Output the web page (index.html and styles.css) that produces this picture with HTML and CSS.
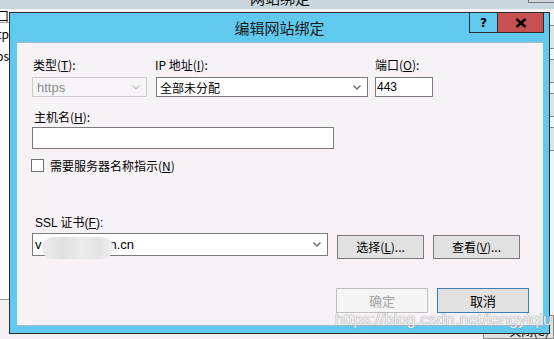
FILE: index.html
```html
<!DOCTYPE html>
<html>
<head>
<meta charset="utf-8">
<link rel="stylesheet" href="styles.css">
</head>
<body>
<div class="parent">
  <div class="parent-title">
    <span class="parent-title-text">网站绑定</span>
    <span class="parent-close"></span>
  </div>
  <div class="parent-body">
    <div class="left-panel">
      <div class="lp-row lp-head">端口</div>
      <div class="lp-row">http</div>
      <div class="lp-row">https</div>
    </div>
    <div class="spacer"></div>
    <div class="right-panel">
      <div class="rp-btn"></div>
      <div class="rp-btn"></div>
      <div class="rp-btn"></div>
      <div class="rp-btn"></div>
    </div>
  </div>
  <div class="parent-foot">
    <span class="parent-close-btn">关闭(C)</span>
  </div>
</div>

<div class="dialog">
  <div class="titlebar">
    <span class="title">编辑网站绑定</span>
    <div class="tb-buttons">
      <span class="tb-help">?</span>
      <span class="tb-close"><svg width="12" height="10" viewBox="0 0 12 10"><path d="M1.5 1 L10.5 9 M10.5 1 L1.5 9" stroke="#000" stroke-width="2.4" fill="none"/></svg></span>
    </div>
  </div>
  <div class="content">
    <div class="row-top">
      <div class="col col-type">
        <label class="lbl">类型(<u>T</u>):</label>
        <div class="select disabled"><span class="val">https</span><svg class="chev" width="8" height="5" viewBox="0 0 8 5"><path d="M0.5 0.5 L4 4 L7.5 0.5" stroke="#c4c4c4" stroke-width="1.4" fill="none"/></svg></div>
      </div>
      <div class="col col-ip">
        <label class="lbl">IP 地址(<u>I</u>):</label>
        <div class="select"><span class="val">全部未分配</span><svg class="chev" width="8" height="5" viewBox="0 0 8 5"><path d="M0.5 0.5 L4 4 L7.5 0.5" stroke="#6a6a6a" stroke-width="1.4" fill="none"/></svg></div>
      </div>
      <div class="col col-port">
        <label class="lbl">端口(<u>O</u>):</label>
        <div class="input port"><span class="val">443</span></div>
      </div>
    </div>
    <label class="lbl lbl-host">主机名(<u>H</u>):</label>
    <div class="input host"></div>
    <div class="check-row">
      <span class="checkbox"></span>
      <span class="check-lbl">需要服务器名称指示(<u>N</u>)</span>
    </div>
    <label class="lbl lbl-ssl">SSL 证书(<u>F</u>):</label>
    <div class="ssl-row">
      <div class="select ssl"><span class="val">v<span class="blur"></span>n.cn</span><svg class="chev" width="8" height="5" viewBox="0 0 8 5"><path d="M0.5 0.5 L4 4 L7.5 0.5" stroke="#6a6a6a" stroke-width="1.4" fill="none"/></svg></div>
      <button class="btn btn-sel">选择(<u>L</u>)...</button>
      <button class="btn btn-view">查看(<u>V</u>)...</button>
    </div>
    <div class="foot">
      <button class="btn btn-big disabled">确定</button>
      <button class="btn btn-big default">取消</button>
    </div>
    <div class="watermark">https://blog.csdn.net/lengyiqiu</div>
  </div>
</div>
</body>
</html>
```
FILE: styles.css
```css
* { box-sizing: border-box; }
html, body { margin: 0; padding: 0; }
body {
  width: 554px;
  height: 339px;
  overflow: hidden;
  position: relative;
  background: #f4f0f4;
  font-family: "Noto Sans CJK SC", "Liberation Sans", sans-serif;
  font-size: 12px;
  color: #000;
}

/* parent window behind the dialog */
.parent { display: flex; flex-direction: column; height: 100%; }
.parent-title {
  height: 12px;
  background: #c8d7dd;
  position: relative;
  overflow: hidden;
}
.parent-title-text {
  position: absolute;
  left: 250px;
  top: -12px;
  font-size: 15px;
  line-height: 20px;
  color: #111;
}
.parent-close {
  position: absolute;
  left: 528px;
  top: -2px;
  width: 30px;
  height: 5px;
  border: 1px solid #7a7a7a;
}
.parent-body { display: flex; height: 292px; }
.left-panel {
  width: 9px;
  height: 291px;
  background: #fff;
  border-bottom: 1px solid #9a9a9a;
  overflow: hidden;
}
.lp-row {
  height: 22px;
  line-height: 22px;
  white-space: nowrap;
  font-size: 12px;
  direction: rtl;
  width: 9px;
  overflow: hidden;
}
.lp-head { height: 14px; line-height: 14px; border-bottom: 1px solid #a0a0a0; }
.spacer { flex: 1; }
.right-panel {
  width: 5px;
  background: #f2f2f2;
  padding-top: 16px;
  display: flex;
  flex-direction: column;
  gap: 10px;
}
.rp-btn { height: 24px; background: #e1e1e1; border-top: 1px solid #888; border-bottom: 1px solid #888; }
.parent-foot { flex: 1; display: flex; justify-content: flex-end; align-items: flex-start; padding-top: 15px; }
.parent-close-btn {
  width: 71px;
  height: 24px;
  background: #e1e1e1;
  border: 1px solid #8a8a8a;
  text-align: right;
  padding-right: 4px;
  line-height: 30px;
}

/* dialog window (floats over the parent window) */
.dialog {
  position: absolute;
  left: 9px;
  top: 12px;
  width: 541px;
  height: 322px;
  background: #62c9ee;
  border: 1px solid #2c2c2c;
  display: flex;
  flex-direction: column;
}
.titlebar {
  height: 29px;
  position: relative;
  display: flex;
  justify-content: center;
  align-items: center;
}
.title { font-size: 15px; line-height: 20px; color: #1a1a1a; margin-top: 1px; }
.tb-buttons {
  position: absolute;
  right: 5px;
  top: -1px;
  display: flex;
}
.tb-help {
  width: 28px;
  height: 21px;
  border: 1px solid #2c2c2c;
  border-right: none;
  font-family: "DejaVu Sans", sans-serif;
  font-weight: bold;
  font-size: 12px;
  display: flex;
  align-items: center;
  justify-content: center;
}
.tb-close {
  width: 47px;
  height: 21px;
  background: #c75050;
  border: 1px solid #2c2c2c;
  display: flex;
  align-items: center;
  justify-content: center;
}

.content {
  position: relative;
  margin: 0 6px 7px 7px;
  flex: 1;
  background: #f6f2f6;
  border-top: 1px solid #a9bccb;
  border-bottom: 1px solid #a9bccb;
  padding: 14px 0 0 15px;
  display: flex;
  flex-direction: column;
  align-items: flex-start;
}
.lbl { display: block; line-height: 16px; height: 16px; padding-left: 1px; }
.lbl u, .check-lbl u, .btn u { text-decoration: underline; text-underline-offset: 1px; }

.row-top { display: flex; align-items: flex-start; }
.col { display: flex; flex-direction: column; }
.col .lbl { margin-bottom: 4px; }
.col-type { width: 115px; }
.col-ip { width: 212px; margin-left: 9px; }
.col-ip .lbl { padding-left: 0; margin-left: -1px; }
.col-port { width: 58px; margin-left: 7px; }
.col-port .lbl { padding-left: 0; }

.select, .input {
  height: 20px;
  background: #fff;
  border: 1px solid #7a7a7a;
  display: flex;
  align-items: center;
  position: relative;
}
.select .val { padding-left: 3px; flex: 1; white-space: nowrap; font-family: "Liberation Sans", "Noto Sans CJK SC", sans-serif; }
.select .chev { margin-right: 6px; }
.select.disabled { border-color: #cccccc; background: #f7f4f7; color: #8d8d8d; }
.select.disabled .val { font-size: 13px; padding-left: 4px; }
.col-ip .select .val { font-family: "Noto Sans CJK SC", sans-serif; }
.input .val { padding-left: 1px; font-family: "Liberation Sans", sans-serif; font-size: 12px; }

.lbl-host { margin-top: 12px; margin-left: 1px; }
.input.host { width: 302px; height: 22px; margin-top: 2px; }

.check-row { display: flex; align-items: center; margin-top: 10px; height: 13px; }
.checkbox {
  width: 13px;
  height: 13px;
  border: 1px solid #707070;
  background: #fff;
  margin-left: -1px;
}
.check-lbl { margin-left: 6px; line-height: 16px; }

.lbl-ssl { margin-top: 43px; margin-left: 2px; font-family: "Liberation Sans", "Noto Sans CJK SC", sans-serif; }
.ssl-row { display: flex; align-items: flex-start; margin-top: 2px; }
.select.ssl { width: 296px; height: 23px; }
.select.ssl .val { font-size: 13px; padding-left: 2px; display: flex; align-items: center; }
.blur {
  display: inline-block;
  width: 71px;
  height: 22px;
  margin: 0 -3px 0 0;
  border-radius: 11px;
  background: linear-gradient(90deg, #ececec, #e0e0e0 30%, #ebebeb 55%, #e3e3e3 80%, #eeeeee);
  position: relative;
  top: 3px;
}

.btn {
  font-family: "Noto Sans CJK SC", sans-serif;
  font-size: 12px;
  color: #000;
  background: #e1e1e1;
  border: 1px solid #7a7a7a;
  padding: 0;
  height: 24px;
  line-height: 20px;
}
.btn-sel { width: 87px; margin-left: 9px; margin-top: 2px; }
.btn-view { width: 87px; margin-left: 9px; margin-top: 2px; }

.foot {
  align-self: stretch;
  display: flex;
  justify-content: flex-end;
  gap: 9px;
  margin-top: 29px;
  padding-right: 14px;
}
.btn-big { width: 92px; height: 25px; font-size: 13px; }
.btn-big.disabled { background: #f4f4f4; border-color: #bfbfbf; color: #a3a3a3; }
.btn-big.default { border-color: #3c7fb1; }

.watermark {
  position: absolute;
  left: 318px;
  bottom: -4px;
  font-family: "Liberation Sans", sans-serif;
  font-size: 16px;
  color: rgba(255, 255, 255, 0.9);
  text-shadow: 0 0 1px rgba(120, 120, 120, 0.8), 0 0 1px rgba(120, 120, 120, 0.5);
  white-space: nowrap;
  letter-spacing: 0.2px;
}
```
